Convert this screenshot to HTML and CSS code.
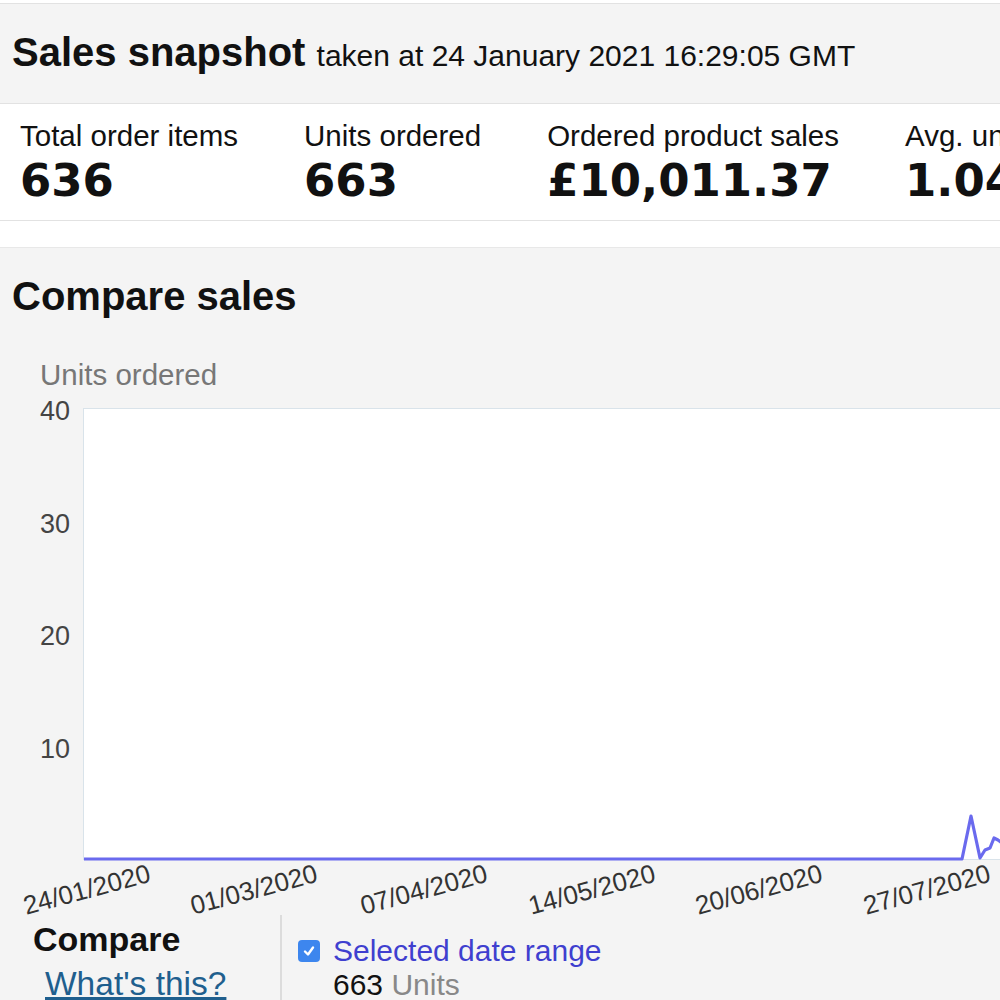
FILE: index.html
```html
<!DOCTYPE html>
<html lang="en">
<head>
    <meta charset="UTF-8">
    <meta name="viewport" content="width=device-width, initial-scale=1.0">
    <title>Sales snapshot</title>
    <link rel="stylesheet" href="styles.css">
</head>
<body>
    <div class="snapshot-head">
        <h1>Sales snapshot <span class="taken">taken at 24 January 2021 16:29:05 GMT</span></h1>
    </div>
    <div class="metrics">
        <div class="metric">
            <div class="metric-label">Total order items</div>
            <div class="metric-value">636</div>
        </div>
        <div class="metric">
            <div class="metric-label">Units ordered</div>
            <div class="metric-value">663</div>
        </div>
        <div class="metric">
            <div class="metric-label">Ordered product sales</div>
            <div class="metric-value">£10,011.37</div>
        </div>
        <div class="metric">
            <div class="metric-label">Avg. units per order item</div>
            <div class="metric-value">1.04</div>
        </div>
    </div>
    <div class="spacer"></div>

    <div class="compare">
        <h2>Compare sales</h2>
        <div class="axis-title">Units ordered</div>
        <svg class="chart" width="1000" height="520" viewBox="0 0 1000 520">
            <rect x="83.5" y="13.5" width="1000" height="451" fill="#fff" stroke="#d9e3ea"/>
            <g class="y-labels" text-anchor="end">
                <text x="70" y="25">40</text>
                <text x="70" y="137.5">30</text>
                <text x="70" y="250">20</text>
                <text x="70" y="362.5">10</text>
            </g>
            <polyline fill="none" stroke="#6a6aee" stroke-width="3.2" stroke-linejoin="round"
                points="84,464 962,464 971,421 980,463 985,455 990,453 994,443 998,445 1002,448"/>
            <g class="x-labels" text-anchor="middle">
                <text transform="translate(89 503) rotate(-15)">24/01/2020</text>
                <text transform="translate(256 503) rotate(-15)">01/03/2020</text>
                <text transform="translate(426 503) rotate(-15)">07/04/2020</text>
                <text transform="translate(594 503) rotate(-15)">14/05/2020</text>
                <text transform="translate(761 503) rotate(-15)">20/06/2020</text>
                <text transform="translate(929 503) rotate(-15)">27/07/2020</text>
            </g>
        </svg>
        <div class="compare-bottom">
            <div class="compare-side">
                <div class="compare-title">Compare</div>
                <a class="whats-this" href="#">What's this?</a>
            </div>
            <div class="series">
                <div class="series-row">
                    <span class="checkbox">
                        <svg width="14" height="14" viewBox="0 0 14 14"><path d="M3 7.5 L6 10.5 L11 3.5" fill="none" stroke="#fff" stroke-width="2.4" stroke-linecap="round" stroke-linejoin="round"/></svg>
                    </span>
                    <span class="series-name">Selected date range</span>
                </div>
                <div class="series-total">663 <span class="units">Units</span></div>
            </div>
        </div>
    </div>
</body>
</html>
```

FILE: styles.css
```css
html {
    overflow: hidden;
}
body {
    font-family: "Liberation Sans", Arial, sans-serif;
    margin: 0;
    background-color: #fff;
    color: #111;
}
.snapshot-head {
    margin-top: 3px;
    border-top: 1px solid #e2e2e2;
    border-bottom: 1px solid #e2e2e2;
    background-color: #f4f4f4;
    padding: 24px 12px 23px;
}
h1 {
    margin: 0;
    font-size: 40px;
    line-height: 48px;
    font-weight: bold;
    white-space: nowrap;
}
.taken {
    font-size: 30px;
    font-weight: normal;
}
.metrics {
    display: flex;
    gap: 66px;
    padding: 15px 20px 14px;
    border-bottom: 1px solid #e2e2e2;
    overflow: hidden;
    white-space: nowrap;
}
.metric-label {
    font-size: 29.5px;
    line-height: 34px;
}
.metric-value {
    margin-top: 3px;
    font-family: "DejaVu Sans", Verdana, sans-serif;
    font-size: 45px;
    line-height: 50px;
    font-weight: bold;
}
.spacer {
    height: 26px;
    border-bottom: 1px solid #e8e8e8;
}
.compare {
    background-color: #f4f4f4;
    padding-top: 24px;
    height: 800px;
}
h2 {
    margin: 0 0 0 12px;
    font-size: 40px;
    line-height: 48px;
}
.axis-title {
    margin: 38px 0 0 40px;
    font-size: 29.5px;
    line-height: 34px;
    color: #777;
}
.chart {
    display: block;
    margin-top: 3px;
}
.y-labels text {
    font-family: "Liberation Sans", Arial, sans-serif;
    font-size: 27px;
    fill: #444;
}
.x-labels text {
    font-family: "Liberation Sans", Arial, sans-serif;
    font-size: 26px;
    fill: #333;
}
.compare-bottom {
    display: flex;
}
.compare-side {
    width: 247px;
    padding: 4px 0 0 33px;
    border-right: 2px solid #dcdcdc;
    height: 90px;
}
.compare-title {
    font-size: 34px;
    line-height: 40px;
    font-weight: bold;
}
.whats-this {
    display: inline-block;
    margin: 5px 0 0 12px;
    font-size: 33.5px;
    line-height: 40px;
    color: #1f5f8e;
}
.series {
    padding: 18px 0 0 16px;
}
.series-row {
    display: flex;
    align-items: center;
    gap: 13px;
    height: 36px;
}
.checkbox {
    display: flex;
    align-items: center;
    justify-content: center;
    width: 22px;
    height: 22px;
    border-radius: 4px;
    background-color: #3d86ee;
}
.series-name {
    font-size: 30px;
    color: #3f3fcf;
}
.series-total {
    margin: -2px 0 0 35px;
    font-size: 30px;
    line-height: 36px;
    color: #111;
}
.units {
    color: #888;
}
```
